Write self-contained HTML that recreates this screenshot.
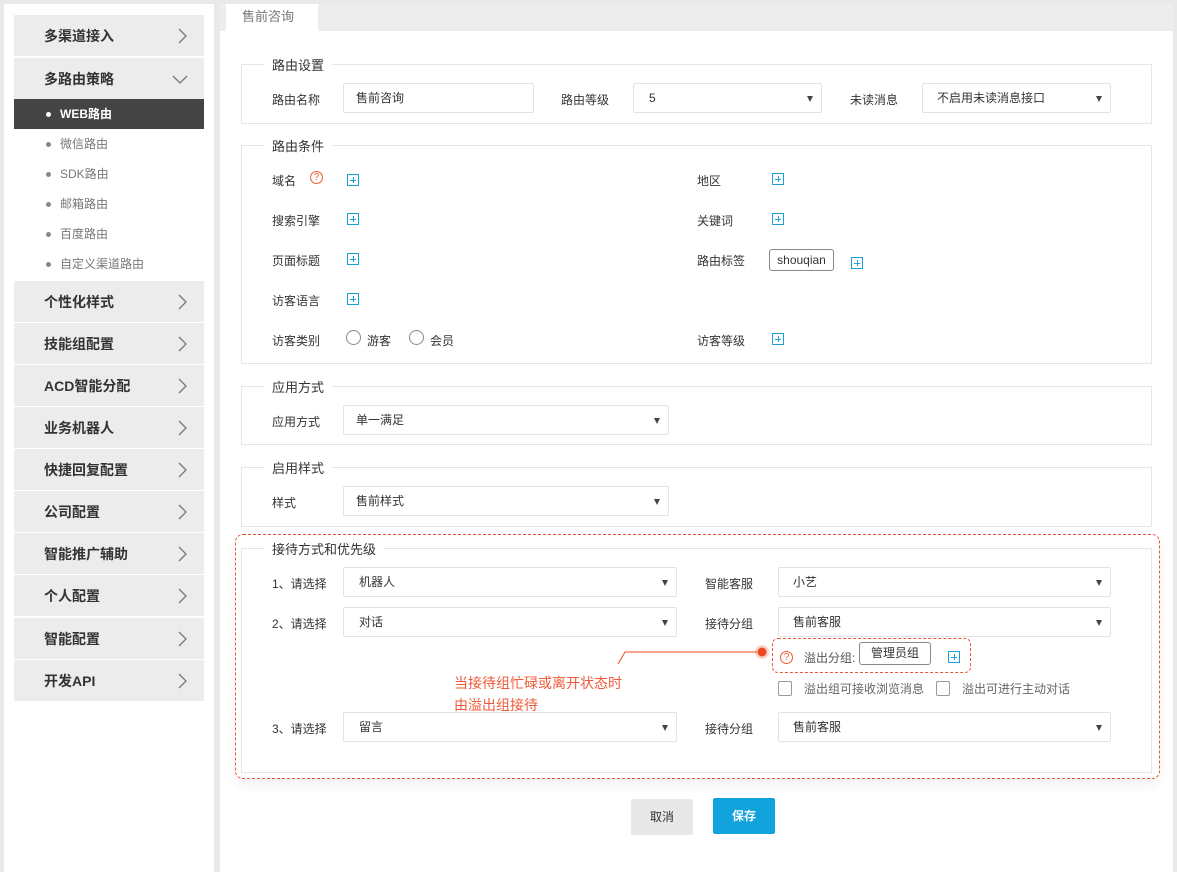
<!DOCTYPE html>
<html><head><meta charset="utf-8"><style>
*{margin:0;padding:0;box-sizing:border-box}
body{width:1177px;height:872px;background:#e9e9e9;font-family:"Liberation Sans","Noto Sans CJK SC",sans-serif;font-size:12px;color:#333;position:relative;overflow:hidden}
.a{position:absolute}
.side{left:4px;top:4px;width:210px;height:868px;background:#fff}
.mi{position:absolute;left:14px;width:190px;height:41px;background:#ececec;font-weight:bold;font-size:14px;color:#333;padding-left:30px;line-height:42px}
.mi svg{position:absolute;right:16px;top:13px}
.sub{position:absolute;left:14px;width:190px;height:30px;line-height:30px;padding-left:46px;color:#777;font-size:12px}
.sub:before{content:"";position:absolute;left:32px;top:13px;width:5px;height:5px;border-radius:50%;background:#888}
.sub.on{background:#444;color:#fff;font-weight:bold}
.sub.on:before{background:#fff}
.main{left:220px;top:4px;width:953px;height:868px;background:#fff}
.fs{position:absolute;border:1px solid #e6e6e6}
.lg{position:absolute;background:#fff;padding:0 8px;font-size:13px;color:#333}
.lb{position:absolute;font-size:12px;color:#333}
.in{position:absolute;height:30px;border:1px solid #e3e3e3;border-radius:2px;padding-left:12px;line-height:28px;font-size:12px;color:#333;background:#fff}
.sel:after{content:"";position:absolute;right:8px;top:12px;border-left:3.5px solid transparent;border-right:3.5px solid transparent;border-top:6px solid #444}
.plus{position:absolute;width:12px;height:12px;border:1px solid #1a9fd8}
.plus:before{content:"";position:absolute;left:2px;top:4.5px;width:6px;height:1px;background:#1a9fd8}
.plus:after{content:"";position:absolute;left:4.5px;top:2px;width:1px;height:6px;background:#1a9fd8}
.radio{position:absolute;width:15px;height:15px;border:1px solid #888;border-radius:50%}
.cb{position:absolute;width:14px;height:15px;border:1px solid #999;border-radius:2px}
.q{position:absolute;width:13px;height:13px;border:1.3px solid #ee5a2f;border-radius:50%;color:#ee5a2f;font-size:10px;line-height:11px;text-align:center}
</style></head><body>
<div class="a side"></div>
<div class="mi" style="top:15px">多渠道接入<svg width="10" height="16"><path d="M1 1l7 7-7 7" fill="none" stroke="#777" stroke-width="1.3"/></svg></div>
<div class="mi" style="top:58px">多路由策略<svg width="16" height="10" style="right:16px;top:17px"><path d="M1 1l7 7 7-7" fill="none" stroke="#777" stroke-width="1.3"/></svg></div>
<div class="sub on" style="top:99px">WEB路由</div>
<div class="sub" style="top:129px">微信路由</div>
<div class="sub" style="top:159px">SDK路由</div>
<div class="sub" style="top:189px">邮箱路由</div>
<div class="sub" style="top:219px">百度路由</div>
<div class="sub" style="top:249px">自定义渠道路由</div>
<div class="mi" style="top:281px">个性化样式<svg width="10" height="16"><path d="M1 1l7 7-7 7" fill="none" stroke="#777" stroke-width="1.3"/></svg></div>
<div class="mi" style="top:323px">技能组配置<svg width="10" height="16"><path d="M1 1l7 7-7 7" fill="none" stroke="#777" stroke-width="1.3"/></svg></div>
<div class="mi" style="top:365px">ACD智能分配<svg width="10" height="16"><path d="M1 1l7 7-7 7" fill="none" stroke="#777" stroke-width="1.3"/></svg></div>
<div class="mi" style="top:407px">业务机器人<svg width="10" height="16"><path d="M1 1l7 7-7 7" fill="none" stroke="#777" stroke-width="1.3"/></svg></div>
<div class="mi" style="top:449px">快捷回复配置<svg width="10" height="16"><path d="M1 1l7 7-7 7" fill="none" stroke="#777" stroke-width="1.3"/></svg></div>
<div class="mi" style="top:491px">公司配置<svg width="10" height="16"><path d="M1 1l7 7-7 7" fill="none" stroke="#777" stroke-width="1.3"/></svg></div>
<div class="mi" style="top:533px">智能推广辅助<svg width="10" height="16"><path d="M1 1l7 7-7 7" fill="none" stroke="#777" stroke-width="1.3"/></svg></div>
<div class="mi" style="top:575px">个人配置<svg width="10" height="16"><path d="M1 1l7 7-7 7" fill="none" stroke="#777" stroke-width="1.3"/></svg></div>
<div class="mi" style="top:618px">智能配置<svg width="10" height="16"><path d="M1 1l7 7-7 7" fill="none" stroke="#777" stroke-width="1.3"/></svg></div>
<div class="mi" style="top:660px">开发API<svg width="10" height="16"><path d="M1 1l7 7-7 7" fill="none" stroke="#777" stroke-width="1.3"/></svg></div>

<div class="a main"></div>
<div class="a" style="left:220px;top:4px;width:953px;height:27px;background:#ededed"></div>
<div class="a" style="left:226px;top:4px;width:92px;height:27px;background:#fff;color:#777;font-size:13px;padding-left:16px;line-height:26px">售前咨询</div>

<!-- 路由设置 -->
<div class="fs" style="left:241px;top:64px;width:911px;height:60px"></div>
<div class="lg" style="left:264px;top:55px">路由设置</div>
<div class="lb" style="left:272px;top:91px">路由名称</div>
<div class="in" style="left:343px;top:83px;width:191px">售前咨询</div>
<div class="lb" style="left:561px;top:91px">路由等级</div>
<div class="in sel" style="left:633px;top:83px;width:189px;padding-left:15px">5</div>
<div class="lb" style="left:850px;top:91px">未读消息</div>
<div class="in sel" style="left:922px;top:83px;width:189px;padding-left:14px">不启用未读消息接口</div>

<!-- 路由条件 -->
<div class="fs" style="left:241px;top:145px;width:911px;height:219px"></div>
<div class="lg" style="left:264px;top:136px">路由条件</div>
<div class="lb" style="left:272px;top:172px">域名</div>
<div class="q" style="left:310px;top:171px">?</div>
<div class="plus" style="left:347px;top:174px"></div>
<div class="lb" style="left:272px;top:212px">搜索引擎</div>
<div class="plus" style="left:347px;top:213px"></div>
<div class="lb" style="left:272px;top:252px">页面标题</div>
<div class="plus" style="left:347px;top:253px"></div>
<div class="lb" style="left:272px;top:292px">访客语言</div>
<div class="plus" style="left:347px;top:293px"></div>
<div class="lb" style="left:272px;top:332px">访客类别</div>
<div class="radio" style="left:346px;top:330px"></div><div class="lb" style="left:367px;top:332px">游客</div>
<div class="radio" style="left:409px;top:330px"></div><div class="lb" style="left:430px;top:332px">会员</div>
<div class="lb" style="left:697px;top:172px">地区</div>
<div class="plus" style="left:772px;top:173px"></div>
<div class="lb" style="left:697px;top:212px">关键词</div>
<div class="plus" style="left:772px;top:213px"></div>
<div class="lb" style="left:697px;top:252px">路由标签</div>
<div class="a" style="left:769px;top:249px;width:65px;height:22px;border:1px solid #888;border-radius:3px;font-size:12px;line-height:20px;text-align:center">shouqian</div>
<div class="plus" style="left:851px;top:257px"></div>
<div class="lb" style="left:697px;top:332px">访客等级</div>
<div class="plus" style="left:772px;top:333px"></div>

<!-- 应用方式 -->
<div class="fs" style="left:241px;top:386px;width:911px;height:59px"></div>
<div class="lg" style="left:264px;top:377px">应用方式</div>
<div class="lb" style="left:272px;top:413px">应用方式</div>
<div class="in sel" style="left:343px;top:405px;width:326px">单一满足</div>

<!-- 启用样式 -->
<div class="fs" style="left:241px;top:467px;width:911px;height:60px"></div>
<div class="lg" style="left:264px;top:458px">启用样式</div>
<div class="lb" style="left:272px;top:494px">样式</div>
<div class="in sel" style="left:343px;top:486px;width:326px">售前样式</div>

<!-- 接待方式 -->
<div class="a" style="left:235px;top:534px;width:925px;height:245px;border:1px dashed #e8553a;border-radius:8px;box-shadow:0 6px 12px rgba(0,0,0,.06)"></div>
<div class="fs" style="left:241px;top:548px;width:911px;height:225px"></div>
<div class="lg" style="left:264px;top:539px">接待方式和优先级</div>
<div class="lb" style="left:272px;top:575px">1、请选择</div>
<div class="in sel" style="left:343px;top:567px;width:334px;padding-left:15px">机器人</div>
<div class="lb" style="left:705px;top:575px">智能客服</div>
<div class="in sel" style="left:778px;top:567px;width:333px;padding-left:14px">小艺</div>
<div class="lb" style="left:272px;top:615px">2、请选择</div>
<div class="in sel" style="left:343px;top:607px;width:334px;padding-left:15px">对话</div>
<div class="lb" style="left:705px;top:615px">接待分组</div>
<div class="in sel" style="left:778px;top:607px;width:333px;padding-left:14px">售前客服</div>
<div class="lb" style="left:272px;top:720px">3、请选择</div>
<div class="in sel" style="left:343px;top:712px;width:334px;padding-left:15px">留言</div>
<div class="lb" style="left:705px;top:720px">接待分组</div>
<div class="in sel" style="left:778px;top:712px;width:333px;padding-left:14px">售前客服</div>

<div class="a" style="left:772px;top:638px;width:199px;height:35px;border:1px dashed #e8553a;border-radius:6px"></div>
<div class="q" style="left:780px;top:651px">?</div>
<div class="lb" style="left:804px;top:649px;color:#555">溢出分组:</div>
<div class="a" style="left:859px;top:642px;width:72px;height:23px;border:1px solid #888;border-radius:3px;font-size:12px;line-height:21px;text-align:center">管理员组</div>
<div class="plus" style="left:948px;top:651px"></div>
<div class="cb" style="left:778px;top:681px"></div><div class="lb" style="left:804px;top:680px;color:#666">溢出组可接收浏览消息</div>
<div class="cb" style="left:936px;top:681px"></div><div class="lb" style="left:962px;top:680px;color:#666">溢出可进行主动对话</div>

<svg class="a" style="left:610px;top:640px" width="170" height="40"><circle cx="152" cy="12" r="7" fill="#f9d3c9"/><circle cx="152" cy="12" r="4.5" fill="#ee4a22"/><path d="M147 12H15L8 24" fill="none" stroke="#ee4a22" stroke-width="1"/></svg>
<div class="a" style="left:454px;top:672px;color:#ef5a3a;font-size:14px;line-height:22px">当接待组忙碌或离开状态时<br>由溢出组接待</div>

<div class="a" style="left:631px;top:799px;width:62px;height:36px;background:#e8e8e8;border-radius:2px;text-align:center;line-height:36px;font-size:12px">取消</div>
<div class="a" style="left:713px;top:798px;width:62px;height:36px;background:#13a3dc;border-radius:2px;text-align:center;line-height:36px;font-size:12px;color:#fff;font-weight:bold">保存</div>
</body></html>
